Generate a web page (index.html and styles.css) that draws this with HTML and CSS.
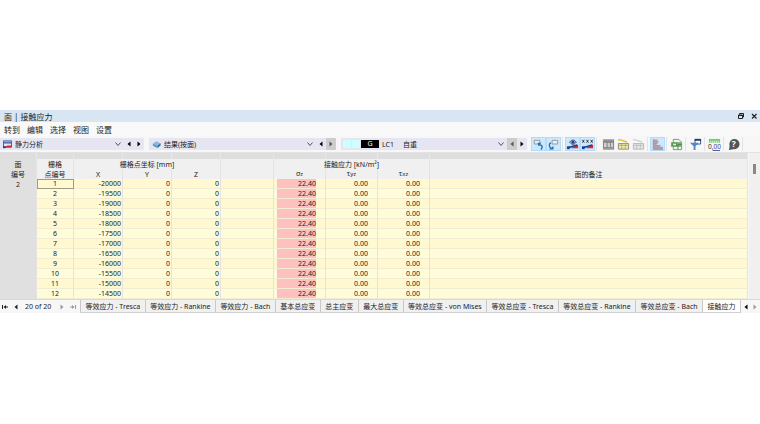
FILE: index.html
```html
<!DOCTYPE html>
<html lang="zh-CN">
<head>
<meta charset="utf-8">
<title>面 | 接触应力</title>
<link rel="stylesheet" href="styles.css">
</head>
<body>
<svg class="defs" aria-hidden="true">
  <symbol id="left" viewBox="0 0 8 8"><path d="M5.5 1.5v5L2.500 4z"/></symbol>
  <symbol id="right" viewBox="0 0 8 8"><path d="M2.500 1.500v5L5.500 4z"/></symbol>
  <symbol id="first" viewBox="0 0 8 8"><path d="M1 2h1v4H1zM5 2v4L2.500 4zM5 3.500h2v1H5z"/></symbol>
  <symbol id="last" viewBox="0 0 8 8"><path d="M6 2h1v4H6zM3 2v4l2.500-2zM1 3.500h2v1H1z"/></symbol>
  <symbol id="beam" viewBox="0 0 14 14"><path d="M5 11l8-4v4z" fill="#e02828"/><path d="M1 9h3v3H1z" fill="#173f8f"/><path d="M2 10.500l10-3" stroke="#173f8f" stroke-width="1.500"/></symbol>
</svg>
<main class="panel">
  <header class="title">
    <h1>面 | 接触应力</h1>
    <button aria-label="还原"><svg viewBox="0 0 8 8"><path d="M2.500 2.500v-1h4v3.500h-1M1.500 3h4v3.500h-4zM1.500 3.500h4" fill="none" stroke="#222"/></svg></button>
    <button aria-label="关闭"><svg viewBox="0 0 8 8"><path d="M2 2l4.500 4.500M6.500 2L2 6.500" fill="none" stroke="#222" stroke-width="1.200"/></svg></button>
  </header>
  <nav class="menu">
    <button>转到</button><button>编辑</button><button>选择</button><button>视图</button><button>设置</button>
  </nav>
  <div class="toolbar">
    <div class="combo analysis">
      <svg class="lead" viewBox="0 0 10 10"><path d="M.5 1h9v7h-9z" fill="#dfe5f3" stroke="#38497c"/><path d="M1 2h8v2H1z" fill="#5474b8"/><path d="M1 8l4-2h4v2z" fill="#cf3035"/><path d="M0 7h3v2H0z" fill="#173a8b"/></svg>
      <select aria-label="分析类型"><option>静力分析</option></select>
      <button aria-label="上一个"><svg><use href="#left"/></svg></button><button aria-label="下一个"><svg><use href="#right"/></svg></button>
    </div>
    <div class="combo results">
      <svg class="lead" viewBox="0 0 10 10"><path d="M1 4l4-2.500 4.500 2L6 6.500z" fill="#86bade"/><path d="M1 4l5 2.500V9L1 6.500z" fill="#5a98c7"/><path d="M6 6.500l3.500-3V6L6 9z" fill="#2e6898"/></svg>
      <select aria-label="结果"><option>结果(按面)</option></select>
      <button aria-label="上一结果"><svg><use href="#left"/></svg></button><button class="off" aria-label="下一结果" disabled><svg><use href="#right"/></svg></button>
    </div>
    <div class="combo loads">
      <i class="swatch"></i><i class="swatch"></i><b class="kind">G</b><span class="case">LC1</span>
      <select aria-label="荷载工况"><option>自重</option></select>
      <button class="off" aria-label="上一工况" disabled><svg><use href="#left"/></svg></button><button aria-label="下一工况"><svg><use href="#right"/></svg></button>
    </div>
    <div class="tools">
      <button class="on" aria-label="选择同步"><svg viewBox="0 0 14 14"><path d="M2.500 2.500h6v4h-6z" fill="#e9eef1" stroke="#8b959c"/><path d="M7 7l3 1c1.500 1 1 3-.5 4.500" fill="none" stroke="#286fae" stroke-width="1.500"/><path d="M6 5h4L7 9z" fill="#286fae"/></svg></button>
      <button class="on" aria-label="视图同步"><svg viewBox="0 0 14 14"><path d="M5.500 2.500h6v4h-6z" fill="#e9eef1" stroke="#8b959c"/><path d="M4 5C2 6.500 2 9 4 11" fill="none" stroke="#286fae" stroke-width="1.500"/><path d="M2 12.500h5V8.500z" fill="#286fae"/></svg></button>
    </div>
    <div class="tools">
      <button class="on" aria-label="显示结果"><svg viewBox="0 0 14 14"><use href="#beam"/><path d="M4 4.500c2-3 5-3 7 0-2 3-5 3-7 0z" fill="#fff" stroke="#26365f"/><circle cx="7.500" cy="4.500" r="1.800" fill="#22448c"/></svg></button>
      <button class="on" aria-label="显示数值"><svg viewBox="0 0 14 14"><use href="#beam"/><path d="M1.500 2l2 3m0-3l-2 3M6 2l2 3m0-3L6 5M10.500 2l2 3m0-3l-2 3" stroke="#333"/></svg></button>
    </div>
    <div class="tools wide">
      <button aria-label="表格列"><svg viewBox="0 0 14 14"><path d="M1 1.500h12v11H1z" fill="#808080"/><path d="M2 5h3v5H2zM6 5h2.500v5H6zM9.500 5H12v5H9.500z" fill="#cfcfcf"/><path d="M1 3h12M1 11.500h12" stroke="#c4c4c4" stroke-dasharray="1 1"/></svg></button>
      <button aria-label="编辑列"><svg viewBox="0 0 14 14"><path d="M1.500 6h11v6h-11z" fill="#eeea9c" stroke="#888"/><path d="M5 6v6M9 6v6M1 8h12" stroke="#aaa"/><path d="M1 2h3l7 2.500" fill="none" stroke="#e4b82c" stroke-width="1.500"/></svg></button>
      <button aria-label="重置列" disabled><svg viewBox="0 0 14 14"><path d="M1.500 6h11v6h-11z" fill="#e5e5e5" stroke="#b4b4b4"/><path d="M5 6v6M9 6v6M1 8h12" stroke="#c4c4c4"/><path d="M1 2h3l7 2.500" fill="none" stroke="#d0d0d0" stroke-width="1.500"/></svg></button>
    </div>
    <div class="tools">
      <button class="on" aria-label="结果图"><svg viewBox="0 0 14 14"><path d="M2 1.500h5v2h1v2H6v2h4v2h3v3H2z" fill="#c0a0a8"/><path d="M2.500 1v11.500H13M3 3.500h4M3 6h4M3 8h7M3 10.500h9" fill="none" stroke="#84aaa2"/></svg></button>
    </div>
    <div class="tools">
      <button aria-label="导出表格"><svg viewBox="0 0 14 14"><path d="M3.500 1.500h6l3 3v8h-9z" fill="#eef5ec" stroke="#6d9a69"/><path d="M1 4.500h11v5H1z" fill="#77ac70"/><path d="M3 5.500h4v3H3z" fill="#e6f2e3" stroke="#4f8548"/><path d="M8.500 7h4M8.500 12V7" stroke="#4f8548"/></svg></button>
    </div>
    <div class="tools">
      <button aria-label="筛选"><svg viewBox="0 0 14 14"><path d="M6.500 1.500h6v5h-6z" fill="#fff" stroke="#334c85"/><path d="M6 2h7" stroke="#233d7c" stroke-width="2"/><path d="M1 5h9.500L7 9v4H5V9z" fill="#4f88c5"/></svg></button>
    </div>
    <div class="tools">
      <button aria-label="小数位"><svg class="decimals" viewBox="0 0 14 14"><path d="M1 1h12v4H1z" fill="#79c979"/><path d="M3 3v2M5 3v2M7 3v2M9 3v2M11 3v2" stroke="#e3f4e2"/><text x="0" y="12">0,<tspan>00</tspan></text><path d="M5 13.500h8" stroke="#3c4c9e"/></svg></button>
    </div>
    <div class="tools">
      <button aria-label="帮助"><svg class="help" viewBox="0 0 14 14"><circle cx="8" cy="6.500" r="5.500"/><path d="M3 8l-1 5 5-1z"/><text x="5" y="10">?</text></svg></button>
    </div>
  </div>
  <section class="grid">
    <table>
      <colgroup><col class="c-id"><col class="c-id"><col class="c-xyz"><col class="c-xyz"><col class="c-xyz"><col class="c-gap"><col class="c-res"><col class="c-res"><col class="c-res"><col></colgroup>
      <thead>
        <tr class="strip"><td></td><td></td><td></td><td></td><td></td><td></td><td></td><td></td><td></td><td></td></tr>
        <tr><th class="face">面</th><th>栅格</th><th colspan="3">栅格点坐标 [mm]</th><th></th><th colspan="3">接触应力 [kN/m²]</th><th></th></tr>
        <tr><th class="face">编号</th><th>点编号</th><th>X</th><th>Y</th><th>Z</th><th></th><th>σ<small>z</small></th><th>τ<small>yz</small></th><th>τ<small>xz</small></th><th>面的备注</th></tr>
      </thead>
      <tbody id="rows"></tbody>
    </table>
    <div class="scroll"><i></i></div>
  </section>
  <footer class="bottom">
    <div class="pager">
      <button aria-label="首页"><svg><use href="#first"/></svg></button><button aria-label="上一页"><svg><use href="#left"/></svg></button>
      <span>20 of 20</span>
      <button aria-label="下一页" disabled><svg><use href="#right"/></svg></button><button aria-label="末页" disabled><svg><use href="#last"/></svg></button>
    </div>
    <nav class="tabs">
      <button>等效应力 - Tresca</button><button>等效应力 - Rankine</button><button>等效应力 - Bach</button><button>基本总应变</button><button>总主应变</button><button>最大总应变</button><button>等效总应变 - von Mises</button><button>等效总应变 - Tresca</button><button>等效总应变 - Rankine</button><button>等效总应变 - Bach</button><button class="current">接触应力</button>
    </nav>
    <div class="shift">
      <button aria-label="向左"><svg><use href="#left"/></svg></button><button aria-label="向右" disabled><svg><use href="#right"/></svg></button>
    </div>
  </footer>
</main>
<script src="rows.js"></script>
</body>
</html>
```
FILE: rows.js
```js
const body = document.getElementById("rows");
for (let i = 0; i < 12; i++) {
  const row = body.insertRow();
  const values = [i ? "" : "2", i + 1, -20000 + i * 500, 0, 0, "", "22.40", "0.00", "0.00", ""];
  values.forEach((value, column) => {
    const cell = row.insertCell();
    if (column === 6) {
      const bar = document.createElement("span");
      bar.className = "bar";
      bar.textContent = value;
      cell.append(bar);
    } else {
      cell.textContent = value;
    }
  });
}
```
FILE: styles.css
```css
* { box-sizing: border-box; }
body {
  margin: 0;
  padding-top: 110px;
  background: #fff;
  color: #222;
  font: 7px/9px "Noto Sans", "Noto Sans CJK SC", sans-serif;
}
button, select {
  font: inherit;
  color: inherit;
  border: 0;
  padding: 0;
  margin: 0;
  background: none;
}
svg { display: block; width: 8px; height: 8px; }
.defs { position: absolute; width: 0; height: 0; }
button:disabled { color: #999; }
button svg { fill: currentColor; }

.title {
  display: flex;
  align-items: center;
  gap: 5px;
  height: 12px;
  padding: 0 2px 0 4px;
  background: #d8e6f3;
}
.title h1 { flex: 1; margin: 0; font-size: 8px; font-weight: 400; }
.menu {
  display: flex;
  gap: 7px;
  height: 14px;
  padding: 0 4px;
  background: #f9f9f9;
  font-size: 8px;
}

.toolbar {
  display: flex;
  align-items: center;
  height: 17px;
  background: #f7f7f7;
  border-bottom: 1px solid #e2e2e2;
}
.combo {
  display: flex;
  align-items: center;
  height: 12px;
  background: #e6e6f2;
}
.combo select {
  flex: 1;
  min-width: 0;
  height: 12px;
  appearance: none;
  background: url("data:image/svg+xml,%3Csvg xmlns='http://www.w3.org/2000/svg' viewBox='0 0 8 8'%3E%3Cpath d='M1.500 2.500L4 5.500l2.500-3' fill='none' stroke='%23555'/%3E%3C/svg%3E") right 2px center / 8px 8px no-repeat;
}
.combo button { display: grid; place-items: center; width: 10px; height: 12px; color: #000; }
.combo .off { background: #cdcdcd; color: #555; }
.lead { width: 9px; height: 9px; margin: 0 3px; }
.analysis { width: 144px; }
.results { width: 187px; margin-left: 5px; }
.loads { width: 186px; margin-left: 5px; padding-left: 2px; }
.swatch { width: 8px; height: 8px; margin-right: 1px; background: #ccffff; }
.kind {
  width: 18px;
  height: 8px;
  background: #000;
  color: #fff;
  font-weight: 400;
  line-height: 8px;
  text-align: center;
}
.case { width: 24px; padding-left: 3px; }

.tools {
  display: flex;
  margin-left: 2px;
  padding-right: 1px;
  border-right: 1px solid #e4e4e4;
}
.tools button { display: grid; place-items: center; width: 15px; height: 14px; color: #555; }
.tools .on { background: #cce8ff; outline: 1px solid #b4dcfa; outline-offset: -1px; }
.tools svg { width: 13px; height: 13px; }
.loads + .tools { margin-left: 4px; }
.tools.wide { margin-left: 4px; }
.decimals text { font-size: 7px; fill: #333; }
.decimals tspan { fill: #3c4c9e; }
.help { fill: #555; }
.help text { font-size: 9px; font-weight: 700; fill: #fff; }

.grid { display: flex; height: 147px; background: #f0f0f0; border-bottom: 1px solid #d8d8d8; }
table {
  flex: 1;
  width: 100%;
  height: 146px;
  table-layout: fixed;
  border-collapse: separate;
  border-spacing: 0;
}
.c-id { width: 37px; }
.c-xyz { width: 49px; }
.c-gap { width: 53px; }
.c-res { width: 52px; }
th, td { padding: 0; border-right: 1px solid #e3e3e3; }
th { height: 10px; font-weight: 400; background: #f0f0f0; }
th small { font-size: 6px; }
.face { background: #e0e0e0; }
.strip td { height: 6px; background: #dedede; border-right-color: #e8e8e8; }
tbody td {
  background: #fffcd9;
  border-bottom: 1px solid #f2edd2;
  text-align: right;
}
tbody tr:nth-child(odd) td { background: #fff8d0; }
tbody tr td:first-child { background: #e0e0e0; border-bottom: 0; text-align: center; }
tbody td:nth-child(2) { text-align: center; }
tbody tr:first-child td:nth-child(2) { outline: 1px solid #9c9a80; outline-offset: -1px; }
tbody td:nth-child(n+3) { padding-right: 1px; }
tbody td:nth-child(n+7) { padding-right: 9px; }
.bar { display: block; margin-left: 3px; background: #ffc0c0; }
.scroll { width: 12px; padding: 11px 4px; border-left: 1px solid #f8f8f8; }
.scroll i { display: block; width: 3px; height: 10px; background: #888; }

.bottom { display: flex; height: 13px; background: #f7f7f7; }
.pager { display: flex; align-items: center; width: 81px; padding-left: 1px; border-right: 1px solid #c8c8c8; }
.pager button { width: 11px; }
.pager span { width: 35px; padding-left: 2px; }
.tabs { display: flex; flex: 1; min-width: 0; }
.tabs button {
  flex: 1 0 auto;
  padding: 0 3px;
  background: #f0f0f0;
  border-right: 1px solid #c8c8c8;
  border-bottom: 1px solid #d0d0d0;
  white-space: nowrap;
}
.tabs .current { background: #fff; }
.shift { display: flex; align-items: center; gap: 1px; padding: 0 1px; color: #000; }
```
